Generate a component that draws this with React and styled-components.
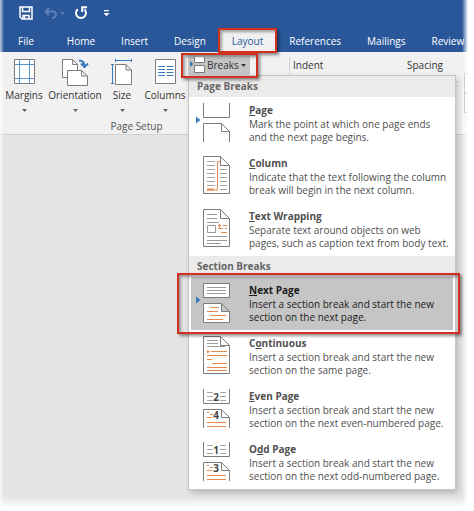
import React from 'react'
import styled, { createGlobalStyle, css } from 'styled-components'

const pageBreaks = [
    { icon: 'page', before: '', key: 'P', after: 'age', lines: ['Mark the point at which one page ends', 'and the next page begins.'] },
    { icon: 'column', before: '', key: 'C', after: 'olumn', lines: ['Indicate that the text following the column', 'break will begin in the next column.'] },
    { icon: 'wrap', before: '', key: 'T', after: 'ext Wrapping', lines: ['Separate text around objects on web', 'pages, such as caption text from body text.'] },
]

const sectionBreaks = [
    { icon: 'next', before: '', key: 'N', after: 'ext Page', lines: ['Insert a section break and start the new', 'section on the next page.'], active: true },
    { icon: 'continuous', before: 'C', key: 'o', after: 'ntinuous', lines: ['Insert a section break and start the new', 'section on the same page.'] },
    { icon: 'even', before: '', key: 'E', after: 'ven Page', lines: ['Insert a section break and start the new', 'section on the next even-numbered page.'] },
    { icon: 'odd', before: 'O', key: 'd', after: 'd Page', lines: ['Insert a section break and start the new', 'section on the next odd-numbered page.'] },
]

const tabs = ['Home', 'Insert', 'Design', 'Layout', 'References', 'Mailings', 'Review']

const grey = '#7d7d7d'
const blue = '#3a7abf'
const orange = '#e58a4e'

const SaveIcon = () => (
    <svg width="14" height="14" viewBox="0 0 14 14" fill="none" stroke="#fff" strokeWidth="1.5">
        <path d="M1 1h12v12H3l-2-2z M3.5 1v4.5h7V1" />
        <path d="M4 13V9.5h6V13" />
        <path d="M5.5 10v3" />
    </svg>
)

const UndoIcon = () => (
    <svg width="13" height="12" viewBox="0 0 13 12" fill="none" stroke="#5d80b8" strokeWidth="2">
        <path d="M5 1L1.5 4.5L5 8 M2 4.5h6q4 0 4 3.2q0 3-4 3.3" />
    </svg>
)

const RedoIcon = () => (
    <svg width="14" height="14" viewBox="0 0 14 14" fill="none" stroke="#fff" strokeWidth="2">
        <path d="M3.8 3.2A5 5 0 1 0 10.4 3.4" />
        <path d="M13 1.2H8.2V6" />
    </svg>
)

const MoreIcon = () => (
    <svg width="7" height="7" viewBox="0 0 7 7" fill="#fff">
        <path d="M1 0h5v1.2H1z M0.5 3h6L3.5 6.2z" />
    </svg>
)

const Caret = ({ color = '#666' }) => (
    <svg width="5" height="3" viewBox="0 0 5 3" fill={color}>
        <path d="M0 0h5L2.5 3z" />
    </svg>
)

const MarginsIcon = () => (
    <svg width="21" height="25" viewBox="0 0 21 25" fill="none">
        <path d="M.5 .5h20v24H.5z" fill="#fff" stroke={grey} />
        <path d="M5.5 1v23 M15.5 1v23 M1 5.5h19 M1 19.5h19" stroke="#5b93cf" />
    </svg>
)

const OrientationIcon = () => (
    <svg width="27" height="27" viewBox="0 0 27 27" fill="none">
        <path d="M.5 .5h10l5 5v13H.5z M10.5 .5v5h5" fill="#fff" stroke={grey} />
        <path d="M5.5 11.5h14l6 5.5v9.5H5.5z M19.5 11.5v5.5h6" fill="#fff" stroke={grey} />
        <path d="M17 1.5q5.500 0 5.500 6 M19 4.500l3.500 3.500 3.500-3.500" stroke={blue} strokeWidth="2" />
    </svg>
)

const SizeIcon = () => (
    <svg width="22" height="26" viewBox="0 0 22 26" fill="none">
        <path d="M4.5 5.5h10.5l5.5 5.5v14.5H4.5z M15 5.5v5.5h5.5" fill="#fff" stroke={grey} />
        <path d="M4 1.5h17 M4.5 0v3 M20.5 0v3 M1.5 5v20 M0 5.5h3 M0 24.5h3" stroke={blue} />
    </svg>
)

const ColumnsIcon = () => (
    <svg width="21" height="25" viewBox="0 0 21 25" fill="none">
        <path d="M.5 .5h20v24H.5z" fill="#fff" stroke={grey} />
        <path d="M3 7.5h7 M3 10.5h7 M3 13.5h7 M3 16.5h7 M11.5 7.5h7 M11.5 10.5h7 M11.5 13.5h7 M11.5 16.5h7" stroke={blue} />
    </svg>
)

const BreaksIcon = () => (
    <svg width="15" height="16" viewBox="0 0 15 16" fill="none">
        <path d="M4.5 0v5.5h10V0 M4.5 15.5v-7h10v7z" fill="#fff" stroke={grey} />
        <path d="M0 4l3.5 3L0 10z" fill={blue} />
    </svg>
)

const Marker = () => <path d="M1 14.5l4.5 3.5L1 21.5z" fill={blue} />

const sheet = 'M8.5 1.5h17l9 9v28h-26z M25.5 1.5v9h9'
const halfSheet = 'M8.5 40v-18.5h18l8 8V40 M26.5 21.5v8h8'

const BreakIcon = ({ name }) => (
    <svg width="36" height="41" viewBox="0 0 36 41" fill="none">
        {name === 'page' && (
            <>
                <path d={`M8.5 1v14.5h26V1 ${halfSheet}`} stroke={grey} />
                <Marker />
            </>
        )}
        {name === 'column' && (
            <>
                <path d={sheet} stroke={grey} />
                <path d="M12 6.5h8 M12 10.5h8 M12 14.5h8 M12 18.5h8 M12 22.5h8 M12 26.5h8 M12 30.5h8 M25 14.5h7 M25 18.5h7 M25 22.5h7 M25 26.5h7 M25 30.5h7 M25 34.5h7" stroke="#a5a5a5" />
                <path d="M12 35h10.5V6.5h2.5" stroke={orange} />
                <path d="M12 34.5h7" stroke={orange} strokeWidth="2" />
            </>
        )}
        {name === 'wrap' && (
            <>
                <path d={sheet} stroke={grey} />
                <path d="M12 6.5h10 M12 10.5h10 M12 14.5h12 M12 28.5h20 M12 32.5h20 M12 35.5h14 M12.5 17.5h8v7h-8z" stroke="#9a9a9a" />
                <path d="M23 17.5h3 M28 17.5h4 M23 20.5h5 M30 20.5h2 M26 24.5h6 M24.5 16v4" stroke={orange} />
            </>
        )}
        {name === 'next' && (
            <>
                <path d="M8.5 1.5h26v14h-26z M8.5 40.5v-19h18l8 8V40.5z M26.5 21.5v8h8" fill="#fff" stroke={grey} />
                <path d="M12 5.5h19 M12 8.5h19 M12 11.5h19" stroke="#999" />
                <path d="M15 25.5h9 M12 29.5h11 M15 33.5h16 M12 37.5h16" stroke={orange} />
                <Marker />
            </>
        )}
        {name === 'continuous' && (
            <>
                <path d={sheet} stroke={grey} />
                <path d="M12 5.5h11 M12 8.5h11 M12 11.5h18" stroke="#999" />
                <path d="M12 16.5h2 M16 16.5h16 M12 20.5h20 M12 24.5h5 M17 28.5h15 M12 32.5h20 M12 35.5h20" stroke={orange} />
                <path d="M12 15l3 1.5-3 2z" fill={orange} />
            </>
        )}
        {(name === 'even' || name === 'odd') && (
            <>
                <path d={`M8.5 1v14.5h26V1 ${halfSheet}`} stroke={grey} />
                <path d="M12 4.5h6 M25 4.5h6 M12 8.5h6 M25 8.5h6 M12 12.5h6 M25 12.5h6" stroke="#a5a5a5" />
                <path d="M12 24.5h2 M15 26.5h3 M12 29.5h5 M12 34.5h19 M12 38.5h19" stroke={orange} />
                <Digit x="21" y="13">{name === 'even' ? 2 : 1}</Digit>
                <Digit x="21" y="31">{name === 'even' ? 4 : 3}</Digit>
            </>
        )}
    </svg>
)

const BreakItem = ({ item }) => (
    <MenuItem role="menuitem" $active={item.active}>
        <BreakIcon name={item.icon} />
        <ItemText>
            <ItemTitle>
                {item.before}<u>{item.key}</u>{item.after}
            </ItemTitle>
            {item.lines.map((line) => (
                <ItemLine key={line}>{line}</ItemLine>
            ))}
        </ItemText>
    </MenuItem>
)

const App = () => {
    return (
        <Window>
            <GlobalStyle />
            <TitleBar>
                <QuickButton aria-label="Save"><SaveIcon /></QuickButton>
                <QuickButton aria-label="Undo"><UndoIcon /><Caret color="#5d80b8" /></QuickButton>
                <QuickButton aria-label="Redo"><RedoIcon /></QuickButton>
                <QuickButton aria-label="Customize"><MoreIcon /></QuickButton>
            </TitleBar>
            <TabBar>
                <FileTab href="#">File</FileTab>
                {tabs.map((tab) => (
                    <Tab href="#" key={tab} $active={tab === 'Layout'}>{tab}</Tab>
                ))}
            </TabBar>
            <Ribbon>
                <Group>
                    <GroupRow>
                        <BigButton $wide={48}><MarginsIcon /><span>Margins</span><Caret /></BigButton>
                        <BigButton $wide={54}><OrientationIcon /><span>Orientation</span><Caret /></BigButton>
                        <BigButton $wide={40}><SizeIcon /><span>Size</span><Caret /></BigButton>
                        <BigButton $wide={46}><ColumnsIcon /><span>Columns</span><Caret /></BigButton>
                        <BreaksArea>
                            <BreaksButton aria-haspopup="menu" aria-expanded="true">
                                <BreaksIcon />Breaks<Caret color="#333" />
                            </BreaksButton>
                            <Menu role="menu">
                                <MenuHeading>Page Breaks</MenuHeading>
                                {pageBreaks.map((item) => <BreakItem key={item.icon} item={item} />)}
                                <MenuHeading>Section Breaks</MenuHeading>
                                {sectionBreaks.map((item) => <BreakItem key={item.icon} item={item} />)}
                            </Menu>
                        </BreaksArea>
                    </GroupRow>
                    <GroupLabel>Page Setup</GroupLabel>
                </Group>
                <Paragraph>
                    <ColumnTitle>Indent</ColumnTitle>
                    <Spacing>
                        <ColumnTitle>Spacing</ColumnTitle>
                        <Field><span>Before:</span><input defaultValue="0 pt" /></Field>
                        <Field><span>After:</span><input defaultValue="8 pt" /></Field>
                    </Spacing>
                </Paragraph>
            </Ribbon>
            <Fade />
        </Window>
    )
}

export default App

const GlobalStyle = createGlobalStyle`
*{
    box-sizing:border-box;
}
body{
    margin:0;
    background:#fff;
    font-family:"Open Sans","Noto Sans",sans-serif;
    font-size:10px;
    color:#333;
}
button,input{
    font:inherit;
    color:inherit;
}
svg{
    display:block;
    flex:none;
}
`

const marked = css`
&::after{
    content:"";
    position:absolute;
    border:2px solid #d3311f;
    box-shadow:2px 2px 3px rgba(0,0,0,0.45), inset 2px 2px 3px rgba(0,0,0,0.35);
    pointer-events:none;
    z-index:2;
}
`

const Window = styled.div`
position:relative;
min-height:100vh;
overflow:hidden;
display:flex;
flex-direction:column;
background:#e5e5e5;
`

const TitleBar = styled.header`
display:flex;
align-items:center;
gap:11px;
height:28px;
padding:0 19px 2px;
background:#2a579a;
`

const QuickButton = styled.button`
display:flex;
align-items:center;
gap:3px;
padding:0;
border:0;
background:none;
&:nth-child(3){
    margin-left:-2px;
}
&:nth-child(4){
    margin-left:4px;
}
`

const TabBar = styled.nav`
display:flex;
height:24px;
background:#2a579a;
`

const Tab = styled.a`
position:relative;
flex:none;
padding:0 13px;
line-height:27px;
color:${(props) => (props.$active ? '#2a579a' : '#fff')};
background:${(props) => (props.$active ? '#f1f1f1' : 'none')};
text-decoration:none;
${(props) => props.$active && marked}
&::after{
    inset:0 -1px -1px -1px;
}
`

const FileTab = styled(Tab)`
padding:0 20px 0 18px;
`

const Ribbon = styled.section`
display:flex;
height:83px;
background:#f1f1f1;
border-bottom:1px solid #d2d2d2;
`

const Group = styled.div`
display:flex;
flex-direction:column;
width:289px;
flex:none;
`

const GroupRow = styled.div`
display:flex;
height:66px;
`

const GroupLabel = styled.div`
padding-right:16px;
line-height:16px;
text-align:center;
color:#555;
`

const BigButton = styled.button`
display:flex;
flex-direction:column;
align-items:center;
width:${(props) => props.$wide}px;
padding:7px 0 0;
border:0;
background:none;
white-space:nowrap;
svg:first-child{
    margin-bottom:auto;
}
span{
    line-height:16px;
}
svg:last-child{
    margin:6px 0;
}
`

const BreaksArea = styled.div`
position:relative;
height:23px;
padding-top:3px;
z-index:3;
${marked}
&::after{
    inset:1px -8px -3px -7px;
}
`

const BreaksButton = styled.button`
display:flex;
align-items:center;
gap:2px;
height:20px;
padding:0 4px 0 2px;
border:0;
background:#c5c5c5;
`

const Menu = styled.div`
position:absolute;
top:100%;
left:0;
width:268px;
border:1px solid #c6c6c6;
background:#fff;
box-shadow:2px 3px 6px rgba(0,0,0,0.2);
`

const MenuHeading = styled.div`
padding-left:8px;
line-height:21px;
font-weight:700;
color:#666;
background:#ebebeb;
`

const MenuItem = styled.button`
position:relative;
display:flex;
gap:18px;
width:100%;
padding:5px 4px 6px;
border:1px solid #fff;
border-width:0 2px;
text-align:left;
color:${(props) => (props.$active ? '#1c1c1c' : '#505050')};
background:${(props) => (props.$active ? '#c5c5c5' : '#fff')};
${(props) => props.$active && marked}
&::after{
    inset:-4px -7px -4px -14px;
}
`

const ItemText = styled.span`
display:flex;
flex-direction:column;
`

const ItemTitle = styled.strong`
line-height:16px;
font-weight:700;
`

const ItemLine = styled.span`
line-height:13px;
white-space:nowrap;
`

const Paragraph = styled.div`
display:flex;
flex:1;
margin:5px 0;
padding-left:3px;
border-left:1px solid #d4d4d4;
`

const ColumnTitle = styled.div`
width:114px;
line-height:16px;
`

const Spacing = styled.div`
display:flex;
flex-direction:column;
`

const Field = styled.label`
display:flex;
align-items:center;
height:20px;
padding-left:16px;
span{
    width:41px;
}
input{
    width:50px;
    height:20px;
    padding:0 2px;
    border:1px solid #ababab;
    background:#fff;
}
`

const Fade = styled.div`
position:absolute;
inset:0;
pointer-events:none;
z-index:4;
background:
    linear-gradient(to left,#fff 6px,rgba(255,255,255,0) 12px),
    linear-gradient(to top,#fff 3px,rgba(255,255,255,0) 14px),
    linear-gradient(to right,rgba(255,255,255,0.7),rgba(255,255,255,0) 4px);
`

const Digit = styled.text`
font-size:10px;
font-weight:700;
text-anchor:middle;
fill:#444;
`
